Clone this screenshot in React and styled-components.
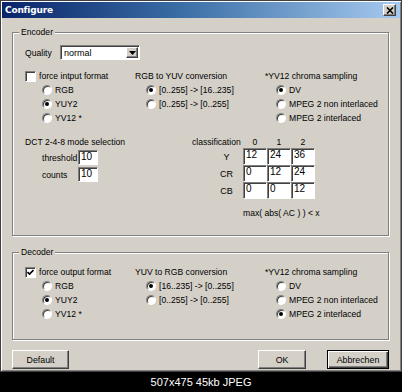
import React from 'react';
import styled, { createGlobalStyle } from 'styled-components';

const Global = createGlobalStyle`
  html, body { margin: 0; padding: 0; background: #000; }
  body { font-family: "Liberation Sans", Arial, sans-serif; -webkit-font-smoothing: antialiased; }
  * { box-sizing: border-box; }
`;

const Screen = styled.div`
  width: 402px;
  height: 392px;
  background: #000;
  display: flex;
  flex-direction: column;
  overflow: hidden;
`;

const Window = styled.div`
  width: 402px;
  height: 372px;
  background: #d4d0c8;
  border: 1px solid #404040;
  box-shadow: inset 1px 1px 0 #fff, inset -1px -1px 0 #808080;
  padding: 1px 1px 0 1px;
  display: flex;
  flex-direction: column;
`;

const TitleBar = styled.div`
  height: 16px;
  background: linear-gradient(to right, #0a246a 0%, #3a6ea5 45%, #a6caf0 100%);
  display: flex;
  align-items: center;
  justify-content: space-between;
  padding: 0 4px 0 3px;
`;

const TitleText = styled.span`
  color: #fff;
  font-weight: bold;
  font-size: 9px;
  font-family: "DejaVu Sans", "Liberation Sans", sans-serif;
  letter-spacing: -0.2px;
`;

const CloseButton = styled.div`
  width: 13px;
  height: 12px;
  background: #d4d0c8;
  border: 1px solid;
  border-color: #fff #404040 #404040 #fff;
  box-shadow: inset -1px -1px 0 #808080;
  display: flex;
  align-items: center;
  justify-content: center;
`;

const Body = styled.div`
  flex: 1;
  display: flex;
  flex-direction: column;
  padding: 14px 11px 0 10px;
`;

const GroupBox = styled.div`
  position: relative;
  height: ${p => p.$h}px;
  margin-top: ${p => p.$mt || 0}px;
  border: 1px solid #808080;
  box-shadow: inset 1px 1px 0 #fff, 1px 1px 0 #fff;
  padding: 12px 12px 0 12px;
`;

const Legend = styled.span`
  position: absolute;
  top: -6px;
  left: 6px;
  padding: 0 2px;
  background: #d4d0c8;
  font-size: 8.6px;
  line-height: 11px;
  color: #000;
`;

const Label = styled.span`
  font-size: 8.6px;
  color: #000;
  white-space: nowrap;
`;

const QualityRow = styled.div`
  display: flex;
  align-items: center;
  height: 15px;
`;

const QualityLabel = styled(Label)`
  width: 35px;
`;

const Combo = styled.div`
  width: 80px;
  height: 15px;
  background: #fff;
  border: 1px solid;
  border-color: #808080 #fff #fff #808080;
  box-shadow: inset 1px 1px 0 #404040;
  display: flex;
  align-items: center;
  padding: 0 1px 0 3px;
  font-size: 9px;
`;

const DropButton = styled.div`
  margin-left: auto;
  width: 12px;
  height: 11px;
  background: #d4d0c8;
  border: 1px solid;
  border-color: #fff #404040 #404040 #fff;
  box-shadow: inset -1px -1px 0 #808080;
  display: flex;
  align-items: center;
  justify-content: center;
`;

const Options = styled.div`
  margin-top: ${p => p.$mt || 0}px;
  display: grid;
  grid-template-columns: 110px 130px 1fr;
`;

const Column = styled.div`
  display: flex;
  flex-direction: column;
`;

const Line = styled.div`
  height: 14px;
  display: flex;
  align-items: center;
  padding-left: ${p => p.$indent || 0}px;
  gap: ${p => p.$gap || 3}px;
`;

const Radio = styled.span`
  position: relative;
  flex: none;
  width: 10px;
  height: 10px;
  border-radius: 50%;
  background: #fff;
  border: 1px solid;
  border-color: #808080 #fff #fff #808080;
  box-shadow: inset 1px 1px 0 #404040;
  &::after {
    content: '';
    display: ${p => (p.$checked ? 'block' : 'none')};
    position: absolute;
    left: 2px;
    top: 2px;
    width: 4px;
    height: 4px;
    border-radius: 50%;
    background: #000;
  }
`;

const Check = styled.span`
  flex: none;
  width: 11px;
  height: 11px;
  background: #fff;
  border: 1px solid;
  border-color: #808080 #fff #fff #808080;
  box-shadow: inset 1px 1px 0 #404040;
  display: flex;
  align-items: center;
  justify-content: center;
`;

const Lower = styled.div`
  margin-top: 11px;
  display: flex;
`;

const DctBlock = styled.div`
  width: 167px;
  display: flex;
  flex-direction: column;
`;

const DctTitle = styled.div`
  height: 12px;
  display: flex;
  align-items: center;
`;

const FieldRow = styled.div`
  display: flex;
  align-items: center;
  margin-top: ${p => p.$mt}px;
`;

const FieldLabel = styled(Label)`
  width: 53px;
  padding-left: 17px;
`;

const Field = styled.div`
  width: ${p => p.$w || 20}px;
  height: ${p => p.$h || 15}px;
  background: #fff;
  border: 1px solid;
  border-color: #808080 #fff #fff #808080;
  box-shadow: inset 1px 1px 0 #404040;
  font-size: 10px;
  line-height: 12px;
  padding-left: 2px;
  color: #000;
`;

const ClassGrid = styled.div`
  display: grid;
  grid-template-columns: 51px 24px 24px 24px;
  grid-template-rows: 12px 17px 17px 17px;
  align-items: center;
`;

const ColHead = styled(Label)`
  text-align: center;
`;

const RowHead = styled(Label)`
  text-align: center;
  padding-left: 18px;
  font-size: 9px;
`;

const MaxNote = styled(Label)`
  grid-column: 2 / 5;
  margin-top: 9px;
`;

const ButtonRow = styled.div`
  margin-top: 10px;
  display: flex;
  align-items: center;
`;

const Button = styled.div`
  width: ${p => p.$w}px;
  height: 19px;
  margin-left: ${p => p.$ml || 0}px;
  background: #d4d0c8;
  border: 1px solid;
  border-color: ${p => (p.$default ? '#000' : '#fff #404040 #404040 #fff')};
  box-shadow: ${p =>
    p.$default
      ? 'inset 1px 1px 0 #fff, inset -1px -1px 0 #404040, inset -2px -2px 0 #808080'
      : 'inset -1px -1px 0 #808080'};
  display: flex;
  align-items: center;
  justify-content: center;
  font-size: 8.8px;
  color: #000;
`;

const Caption = styled.div`
  height: 20px;
  display: flex;
  align-items: center;
  justify-content: center;
  color: #fff;
  font-size: 11px;
  font-family: "Liberation Sans", Arial, sans-serif;
`;

const Spacer = styled.div`
  flex: 1;
`;

function Opt({ checked, children, indent }) {
  return (
    <Line $indent={indent}>
      <Radio $checked={checked} />
      <Label>{children}</Label>
    </Line>
  );
}

function CheckLine({ checked, children }) {
  return (
    <Line $gap={3}>
      <Check>
        {checked && (
          <svg width="7" height="7" viewBox="0 0 7 7">
            <path d="M0.5 3 L2.5 5 L6.5 1" stroke="#000" strokeWidth="1.6" fill="none" />
          </svg>
        )}
      </Check>
      <Label>{children}</Label>
    </Line>
  );
}

function FormatColumns({ decoder }) {
  return (
    <Options $mt={decoder ? 0 : 9}>
      <Column>
        <CheckLine checked={decoder}>{decoder ? 'force output format' : 'force intput format'}</CheckLine>
        <Opt indent={17}>RGB</Opt>
        <Opt indent={17} checked>YUY2</Opt>
        <Opt indent={17}>YV12 *</Opt>
      </Column>
      <Column>
        <Line>
          <Label>{decoder ? 'YUV to RGB conversion' : 'RGB to YUV conversion'}</Label>
        </Line>
        <Opt indent={11} checked>{decoder ? '[16..235] -> [0..255]' : '[0..255] -> [16..235]'}</Opt>
        <Opt indent={11}>[0..255] -&gt; [0..255]</Opt>
      </Column>
      <Column>
        <Line>
          <Label>*YV12 chroma sampling</Label>
        </Line>
        <Opt indent={11} checked={!decoder}>DV</Opt>
        <Opt indent={11}>MPEG 2 non interlaced</Opt>
        <Opt indent={11} checked={decoder}>MPEG 2 interlaced</Opt>
      </Column>
    </Options>
  );
}

const matrix = [
  ['Y', '12', '24', '36'],
  ['CR', '0', '12', '24'],
  ['CB', '0', '0', '12'],
];

export default function App() {
  return (
    <Screen>
      <Global />
      <Window>
        <TitleBar>
          <TitleText>Configure</TitleText>
          <CloseButton>
            <svg width="8" height="7" viewBox="0 0 8 7">
              <path d="M1 0.5 L7 6.5 M7 0.5 L1 6.5" stroke="#000" strokeWidth="1.6" />
            </svg>
          </CloseButton>
        </TitleBar>
        <Body>
          <GroupBox $h={204}>
            <Legend>Encoder</Legend>
            <QualityRow>
              <QualityLabel>Quality</QualityLabel>
              <Combo>
                normal
                <DropButton>
                  <svg width="7" height="4" viewBox="0 0 7 4">
                    <path d="M0 0 H7 L3.5 4 Z" fill="#000" />
                  </svg>
                </DropButton>
              </Combo>
            </QualityRow>
            <FormatColumns />
            <Lower>
              <DctBlock>
                <DctTitle>
                  <Label>DCT 2-4-8 mode selection</Label>
                </DctTitle>
                <FieldRow $mt={2}>
                  <FieldLabel>threshold</FieldLabel>
                  <Field>10</Field>
                </FieldRow>
                <FieldRow $mt={2}>
                  <FieldLabel>counts</FieldLabel>
                  <Field>10</Field>
                </FieldRow>
              </DctBlock>
              <ClassGrid>
                <Label>classification</Label>
                <ColHead>0</ColHead>
                <ColHead>1</ColHead>
                <ColHead>2</ColHead>
                {matrix.map(row => (
                  <React.Fragment key={row[0]}>
                    <RowHead>{row[0]}</RowHead>
                    {row.slice(1).map((v, i) => (
                      <Field key={i} $w={24} $h={17}>{v}</Field>
                    ))}
                  </React.Fragment>
                ))}
                <MaxNote>max( abs( AC ) ) &lt; x</MaxNote>
              </ClassGrid>
            </Lower>
          </GroupBox>
          <GroupBox $h={88} $mt={16}>
            <Legend>Decoder</Legend>
            <FormatColumns decoder />
          </GroupBox>
          <ButtonRow>
            <Button $w={57}>Default</Button>
            <Spacer />
            <Button $w={48}>OK</Button>
            <Button $w={62} $ml={21} $default>Abbrechen</Button>
          </ButtonRow>
        </Body>
      </Window>
      <Caption>507x475 45kb JPEG</Caption>
    </Screen>
  );
}
